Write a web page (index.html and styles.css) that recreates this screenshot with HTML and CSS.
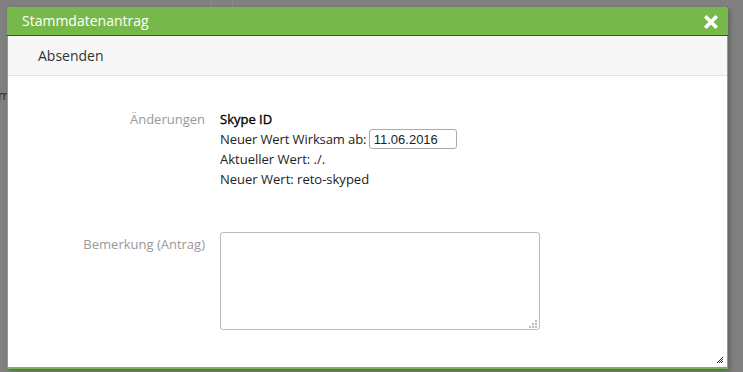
FILE: index.html
```html
<!DOCTYPE html>
<html lang="de">
<head>
<meta charset="utf-8">
<link rel="stylesheet" href="styles.css">
</head>
<body>
<div class="backdrop">
  <div class="bg-strip"><span class="cell c1"></span><span class="cell c2"></span></div>
  <span class="bg-text">m</span>
</div>
<div class="dialog">
  <div class="titlebar">
    <span class="title">Stammdatenantrag</span>
    <svg class="close" width="14" height="14" viewBox="0 0 14 14"><path d="M2.5 2.5 L11.5 11.5 M11.5 2.5 L2.5 11.5" stroke="#fff" stroke-width="3.6" stroke-linecap="square"/></svg>
  </div>
  <div class="toolbar">Absenden</div>
  <div class="content">
    <div class="row">
      <div class="label">Änderungen</div>
      <div class="value">
        <div class="line strong">Skype ID</div>
        <div class="line"><span class="tight">Neuer Wert Wirksam ab:</span> <input class="date" type="text" value="11.06.2016"></div>
        <div class="line">Aktueller Wert: ./.</div>
        <div class="line">Neuer Wert: reto-skyped</div>
      </div>
    </div>
    <div class="row row2">
      <div class="label">Bemerkung (Antrag)</div>
      <div class="value">
        <div class="ta-wrap">
          <textarea class="remark"></textarea>
          <svg class="ta-grip" width="8" height="8" viewBox="0 0 8 8"><g fill="#bbb"><rect x="6" y="0" width="2" height="2"/><rect x="3" y="3" width="2" height="2"/><rect x="6" y="3" width="2" height="2"/><rect x="0" y="6" width="2" height="2"/><rect x="3" y="6" width="2" height="2"/><rect x="6" y="6" width="2" height="2"/></g></svg>
        </div>
      </div>
    </div>
  </div>
  <svg class="grip" width="8" height="8" viewBox="0 0 8 8"><path d="M7 1 L1 7 M7 3 L3 7 M7 5 L5 7" stroke="#333" stroke-width="1"/></svg>
</div>
</body>
</html>
```
FILE: styles.css
```css
html, body { margin: 0; padding: 0; }
body {
  width: 743px;
  height: 372px;
  background: #808080;
  font-family: "Open Sans", "Liberation Sans", sans-serif;
  overflow: hidden;
  position: relative;
}
.backdrop { position: absolute; inset: 0; }
.bg-strip { display: flex; height: 7px; }
.cell { display: block; height: 7px; }
.c1 { width: 211px; border-right: 1px solid #8c8c8c; }
.c2 { width: 20px; border-right: 1px solid #8c8c8c; }
.bg-text { position: absolute; left: -2px; top: 86px; font-size: 13px; color: #3a2a2a; }
.dialog {
  position: absolute;
  left: 7px;
  top: 7px;
  width: 719px;
  height: 360px;
  background: #fff;
  border: 1px solid #76b94a;
  border-top: none;
  border-bottom: 2px solid #76b94a;
  border-radius: 4px 4px 0 0;
  box-shadow: 2px 2px 5px rgba(0,0,0,0.25);
}
.titlebar {
  height: 28px;
  background: #76b94a;
  border-bottom: 1px solid #24630a;
  display: flex;
  align-items: center;
  justify-content: space-between;
  padding: 0 10px 0 15px;
  margin: 0 -1px;
  border-radius: 4px 4px 0 0;
}
.title { color: #fff; font-size: 14px; line-height: 28px; }
.close { display: block; margin-top: 1px; }
.toolbar {
  height: 39px;
  background: #f7f7f7;
  border-bottom: 1px solid #e3e3e3;
  padding-left: 30px;
  font-size: 14px;
  color: #333;
  line-height: 40px;
}
.content { padding-top: 33px; }
.row { display: flex; }
.row2 { margin-top: 43px; }
.label {
  width: 197px;
  text-align: right;
  font-size: 13px;
  color: #999;
  line-height: 20px;
  padding-right: 15px;
}
.row2 .label { padding-top: 2px; }
.value { font-size: 13px; color: #222; line-height: 20px; }
.line { height: 20px; }
.tight { letter-spacing: -0.1px; }
.strong { color: #000; -webkit-text-stroke: 0.35px #000; }
.date {
  font-family: "Liberation Sans", Arial, sans-serif;
  font-size: 13px;
  width: 78px;
  height: 18px;
  padding: 0 4px;
  border: 1px solid #aaa;
  border-radius: 3px;
  margin: 0 0 0 -1px;
  vertical-align: top;
  color: #222;
}
.ta-wrap { position: relative; width: 320px; }
.remark {
  display: block;
  width: 318px;
  height: 96px;
  border: 1px solid #bbb;
  border-radius: 3px;
  margin: 0;
  padding: 0;
  resize: none;
  font-family: "Open Sans", sans-serif;
}
.ta-grip { position: absolute; right: 3px; bottom: 2px; }
.grip { position: absolute; right: 3px; bottom: 3px; }
```
